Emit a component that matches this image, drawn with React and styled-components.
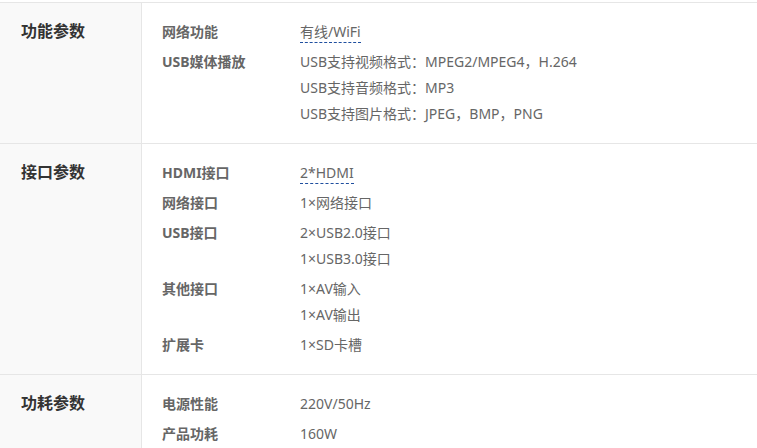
import React from "react";
import styled, { createGlobalStyle } from "styled-components";

const GlobalStyle = createGlobalStyle`
    html, body {
        margin: 0;
        padding: 0;
        background: #fff;
    }
    body {
        font-family: "Noto Sans", "Noto Sans CJK SC", sans-serif;
        color: #666;
    }
`;

const specs = [
    {
        title: "功能参数",
        items: [
            { label: "网络功能", values: ["有线/WiFi"], link: true },
            {
                label: "USB媒体播放",
                values: [
                    "USB支持视频格式：MPEG2/MPEG4，H.264",
                    "USB支持音频格式：MP3",
                    "USB支持图片格式：JPEG，BMP，PNG"
                ]
            }
        ]
    },
    {
        title: "接口参数",
        items: [
            { label: "HDMI接口", values: ["2*HDMI"], link: true },
            { label: "网络接口", values: ["1×网络接口"] },
            { label: "USB接口", values: ["2×USB2.0接口", "1×USB3.0接口"] },
            { label: "其他接口", values: ["1×AV输入", "1×AV输出"] },
            { label: "扩展卡", values: ["1×SD卡槽"] }
        ]
    },
    {
        title: "功耗参数",
        items: [
            { label: "电源性能", values: ["220V/50Hz"] },
            { label: "产品功耗", values: ["160W"] }
        ]
    }
];

const App = () => {
    return <PageWrapper>
        <GlobalStyle />
        <SpecTable>
            {
                specs.map(section => (
                    <Section key={section.title}>
                        <SectionTitle>{section.title}</SectionTitle>
                        <SectionBody>
                            {
                                section.items.map(item => (
                                    <Item key={item.label}>
                                        <Label>{item.label}</Label>
                                        <Values>
                                            {
                                                item.values.map(v => (
                                                    <Value key={v}>
                                                        {item.link ? <Tip>{v}</Tip> : v}
                                                    </Value>
                                                ))
                                            }
                                        </Values>
                                    </Item>
                                ))
                            }
                        </SectionBody>
                    </Section>
                ))
            }
        </SpecTable>
    </PageWrapper>
}

export default App;

const PageWrapper = styled.div`
    padding-top: 2px;
    width: 757px;
    height: 448px;
    overflow: hidden;
`;

const SpecTable = styled.div`
    border-top: 1px solid #e6e6e6;
`;

const Section = styled.div`
    display: flex;
    border-bottom: 1px solid #e6e6e6;
`;

const SectionTitle = styled.div`
    width: 120px;
    flex-shrink: 0;
    padding: 15px 0 0 21px;
    background: #f9f9f9;
    border-right: 1px solid #e6e6e6;
    font-size: 16px;
    font-weight: bold;
    line-height: 26px;
    color: #333;
`;

const SectionBody = styled.div`
    flex: 1;
    display: flex;
    flex-direction: column;
    gap: 4px;
    padding: 16px 0 16px 20px;
`;

const Item = styled.div`
    display: flex;
`;

const Label = styled.div`
    width: 138px;
    flex-shrink: 0;
    font-size: 14px;
    font-weight: bold;
    line-height: 26px;
    color: #666;
`;

const Values = styled.div`
    display: flex;
    flex-direction: column;
`;

const Value = styled.div`
    font-size: 14px;
    line-height: 26px;
    color: #666;
`;

const Tip = styled.span`
    padding-bottom: 1px;
    border-bottom: 1px dashed #1f4f9f;
`;
